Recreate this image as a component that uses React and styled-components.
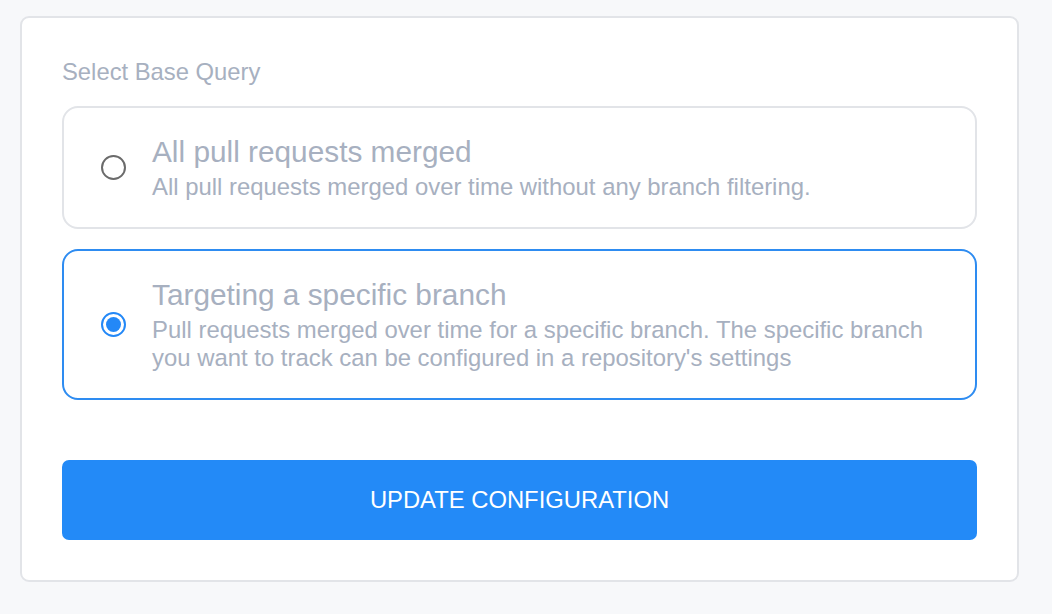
import React, { useState } from "react";
import styled, { createGlobalStyle } from "styled-components";

const GlobalStyle = createGlobalStyle`
  html, body {
    margin: 0;
    padding: 0;
    background: #f7f8fa;
    font-family: "Liberation Sans", Arial, Helvetica, sans-serif;
  }
`;

const Page = styled.div`
  padding: 16px 33px 0 20px;
  min-height: 614px;
  box-sizing: border-box;
`;

const Card = styled.div`
  background: #ffffff;
  border: 2px solid #e2e4e8;
  border-radius: 9px;
  padding: 40px 40px 40px 40px;
  display: flex;
  flex-direction: column;
`;

const Label = styled.div`
  font-size: 23.8px;
  line-height: 28px;
  color: #a7b0c0;
  margin-bottom: 20px;
`;

const Options = styled.div`
  display: flex;
  flex-direction: column;
  gap: 20px;
`;

const Option = styled.label`
  display: flex;
  align-items: center;
  border: 2px solid ${(p) => (p.$selected ? "#2e8cf1" : "#e2e4e8")};
  border-radius: 16px;
  padding: 26px 30px 26px 37px;
  cursor: pointer;
`;

const Radio = styled.span`
  flex: none;
  width: 25px;
  height: 25px;
  box-sizing: border-box;
  border-radius: 50%;
  border: 2px solid ${(p) => (p.$checked ? "#2388f7" : "#6b6b6b")};
  margin-right: 26px;
  display: flex;
  align-items: center;
  justify-content: center;

  &::after {
    content: "";
    width: 15px;
    height: 15px;
    border-radius: 50%;
    background: #2388f7;
    display: ${(p) => (p.$checked ? "block" : "none")};
  }
`;

const Text = styled.div`
  display: flex;
  flex-direction: column;
`;

const Title = styled.div`
  font-size: 29.8px;
  line-height: 36px;
  color: #a7b0c0;
`;

const Desc = styled.div`
  font-size: 23.9px;
  line-height: 28px;
  color: #a7b0c0;
  margin-top: 3px;
`;

const Button = styled.button`
  margin-top: 60px;
  height: 80px;
  border: none;
  border-radius: 7px;
  background: #238af7;
  color: #ffffff;
  font-family: "Liberation Sans", Arial, Helvetica, sans-serif;
  font-size: 23.8px;
  cursor: pointer;
`;

const options = [
  {
    id: "all",
    title: "All pull requests merged",
    desc: "All pull requests merged over time without any branch filtering.",
  },
  {
    id: "branch",
    title: "Targeting a specific branch",
    desc: "Pull requests merged over time for a specific branch. The specific branch you want to track can be configured in a repository's settings",
  },
];

export default function App() {
  const [selected, setSelected] = useState("branch");
  return (
    <>
      <GlobalStyle />
      <Page>
        <Card>
          <Label>Select Base Query</Label>
          <Options>
            {options.map((o) => (
              <Option
                key={o.id}
                $selected={selected === o.id}
                onClick={() => setSelected(o.id)}
              >
                <Radio $checked={selected === o.id} />
                <Text>
                  <Title>{o.title}</Title>
                  <Desc>{o.desc}</Desc>
                </Text>
              </Option>
            ))}
          </Options>
          <Button>UPDATE CONFIGURATION</Button>
        </Card>
      </Page>
    </>
  );
}
